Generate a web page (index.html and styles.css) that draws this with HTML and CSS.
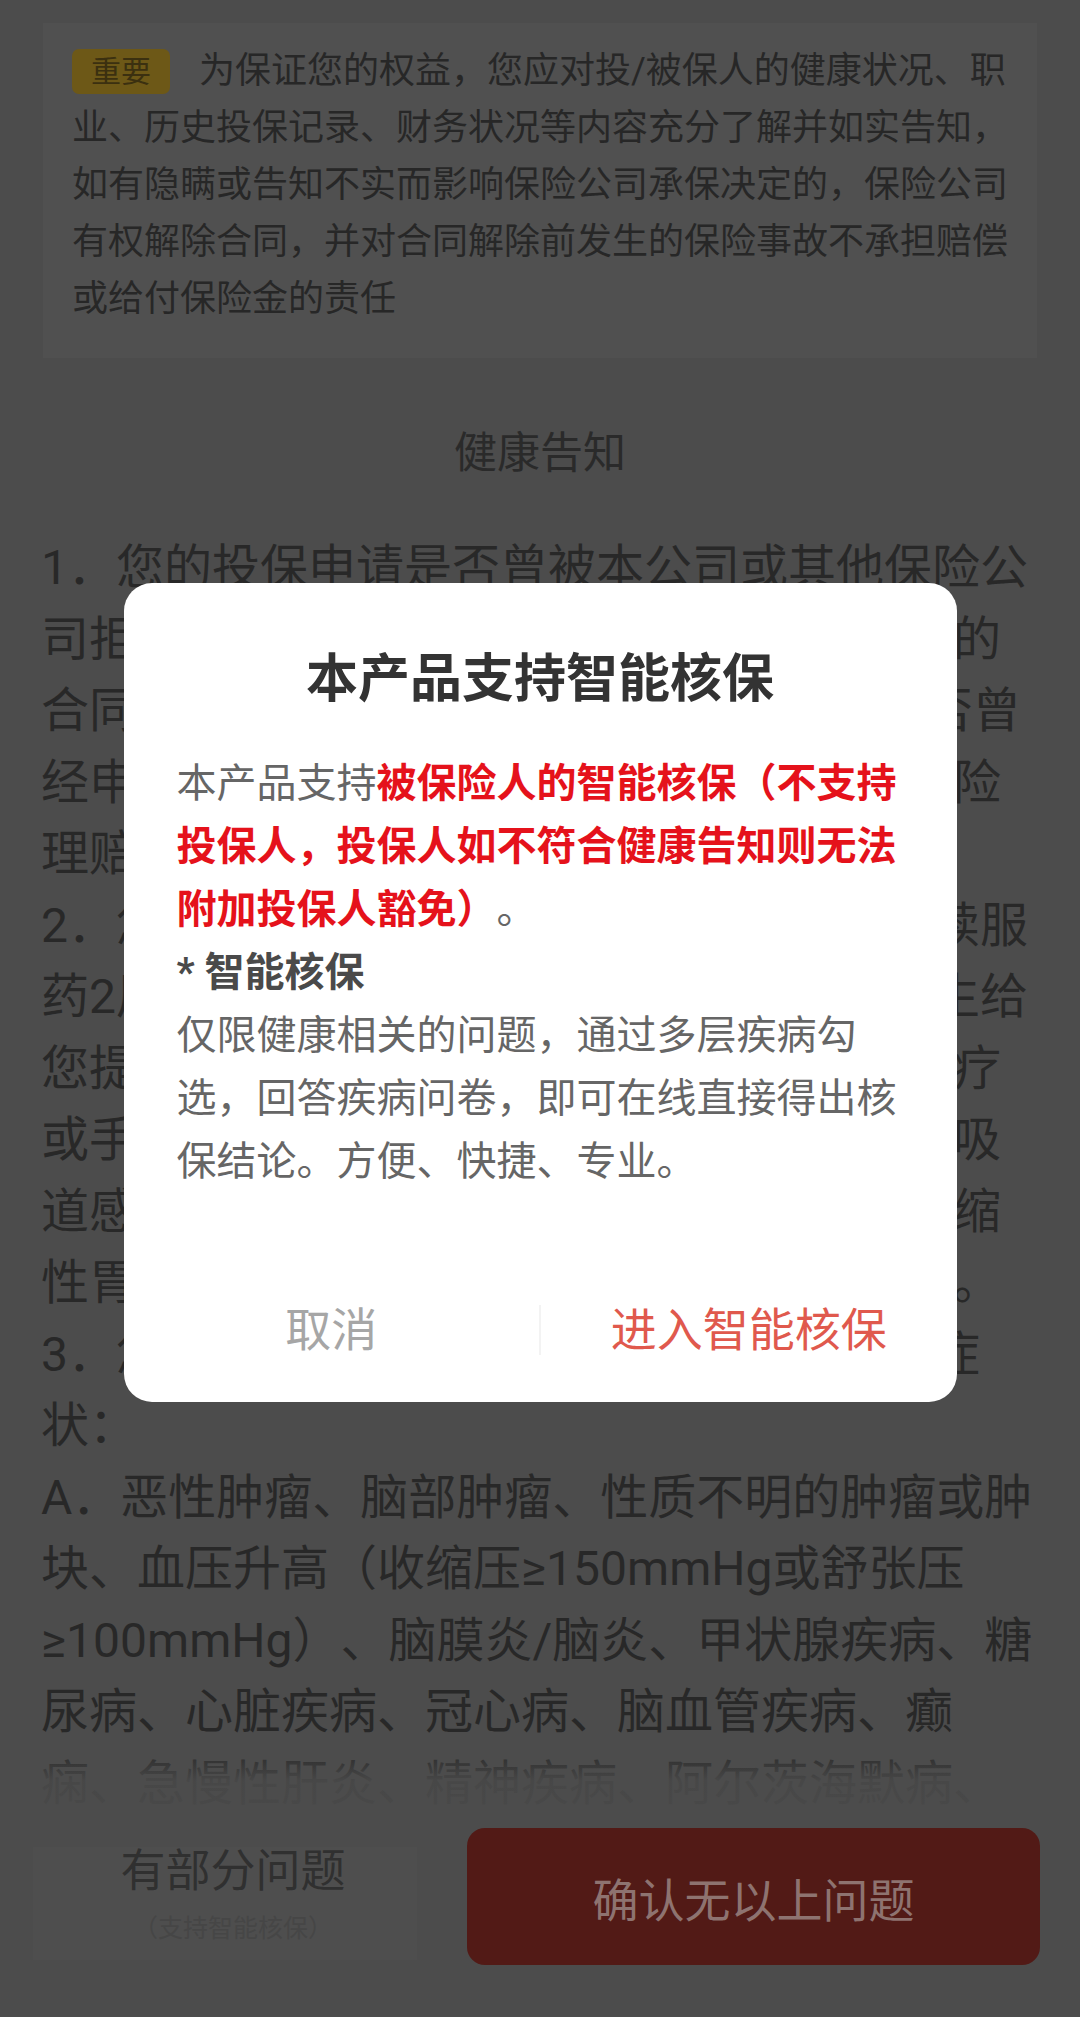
FILE: index.html
```html
<!DOCTYPE html>
<html lang="zh-CN">
<head>
<meta charset="utf-8">
<title>健康告知</title>
<link rel="stylesheet" href="styles.css">
</head>
<body>
<div class="page">
  <main class="content">
    <section class="notice-card">
      <span class="tag">重要</span>为保证您的权益，您应对投/被保人的健康状况、职业、历史投保记录、财务状况等内容充分了解并如实告知，如有隐瞒或告知不实而影响保险公司承保决定的，保险公司有权解除合同，并对合同解除前发生的保险事故不承担赔偿或给付保险金的责任
    </section>
    <h2 class="section-title">健康告知</h2>
    <div class="questions">
      <p>1．您的投保申请是否曾被本公司或其他保险公司拒保、延期、加费、附加条件承保或解除的合同？您是否曾申请过理赔/保全，或者是否曾经申请或正在申请本公司或其他保险公司保险理赔或豁免保费？</p>
      <p>2．您在过去两年内是否因疾病或受伤而连续服药2周以上，或在过去一年内是否曾经有医生给您提出过住院、进一步检查、随访、药物治疗或手术建议？（不包括普通感冒、急性上呼吸道感染、急性肠胃炎、阑尾炎、胆囊炎、萎缩性胃炎、浅表性胃炎、脂肪肝、胆结石等）。</p>
      <p>3．您是否曾经患有下列疾病或者出现下列症状：</p>
      <p>A．恶性肿瘤、脑部肿瘤、性质不明的肿瘤或肿块、血压升高（收缩压≥150mmHg或舒张压≥100mmHg）、脑膜炎/脑炎、甲状腺疾病、糖尿病、心脏疾病、冠心病、脑血管疾病、癫痫、急慢性肝炎、精神疾病、阿尔茨海默病、</p>
    </div>
  </main>
  <footer class="action-bar">
    <div class="btn-partial">
      <span class="btn-partial-label">有部分问题</span>
      <span class="btn-partial-hint">（支持智能核保）</span>
    </div>
    <div class="btn-confirm">确认无以上问题</div>
  </footer>
</div>

<div class="mask">
  <div class="dialog">
    <h1 class="dialog-title">本产品支持智能核保</h1>
    <div class="dialog-body">
      <p>本产品支持<span class="em-red">被保险人的智能核保（不支持投保人，投保人如不符合健康告知则无法附加投保人豁免）</span>。</p>
      <p class="dialog-sub">* 智能核保</p>
      <p>仅限健康相关的问题，通过多层疾病勾选，回答疾病问卷，即可在线直接得出核保结论。方便、快捷、专业。</p>
    </div>
    <div class="dialog-actions">
      <button class="dialog-btn dialog-btn-cancel" type="button">取消</button>
      <span class="dialog-divider"></span>
      <button class="dialog-btn dialog-btn-ok" type="button">进入智能核保</button>
    </div>
  </div>
</div>
</body>
</html>
```

FILE: styles.css
```css
html, body {
  margin: 0;
  padding: 0;
}

body {
  background: #4c4c4c;
  font-family: Roboto, "Noto Sans CJK SC", sans-serif;
  text-spacing-trim: space-all;
}

.page {
  height: 100vh;
  display: flex;
  flex-direction: column;
}

.content {
  flex: 1;
  min-height: 0;
  overflow: hidden;
  padding-top: 23px;
}

/* notice card */
.notice-card {
  margin: 0 43px;
  background: #505050;
  padding: 20px 15px 30px 29px;
  font-size: 36px;
  line-height: 57px;
  color: #272727;
}

.tag {
  display: inline-block;
  vertical-align: top;
  margin: 6px 29px 0 0;
  height: 45px;
  line-height: 45px;
  padding: 0 19px;
  border-radius: 7px;
  background: #6d5817;
  color: #3b3010;
  font-size: 30px;
}

.section-title {
  margin: 65px 0 0;
  text-align: center;
  font-size: 43px;
  line-height: 60px;
  font-weight: 400;
  color: #2a2a2a;
}

.questions {
  margin: 49px 0 0 41px;
  width: 1004px;
  font-size: 48px;
  line-height: 71.5px;
  color: #282828;
}

.questions p {
  margin: 0;
}

/* bottom action bar */
.action-bar {
  position: relative;
  flex: none;
  height: 197px;
  box-sizing: border-box;
  padding: 8px 40px 52px 33px;
  display: flex;
  align-items: flex-start;
  gap: 50px;
  background: #4c4c4c;
}

.action-bar::before {
  content: "";
  position: absolute;
  left: 0;
  right: 0;
  bottom: 100%;
  height: 72px;
  background: linear-gradient(rgba(76, 76, 76, 0), rgba(76, 76, 76, 0.86) 45%, rgba(76, 76, 76, 0.92));
}

.btn-partial {
  width: 384px;
  height: 113px;
  margin-top: 19px;
  box-sizing: border-box;
  padding-left: 16px;
  background: #4e4e4e;
  display: flex;
  flex-direction: column;
  align-items: center;
}

.btn-partial-label {
  font-size: 45px;
  line-height: 50px;
  color: #303030;
}

.btn-partial-hint {
  margin-top: 15px;
  font-size: 25px;
  line-height: 34px;
  color: #464646;
}

.btn-confirm {
  flex: 1;
  height: 137px;
  border-radius: 18px;
  background: #521a16;
  color: #8e7370;
  font-size: 46px;
  display: flex;
  align-items: center;
  justify-content: center;
}

/* modal */
.mask {
  position: fixed;
  inset: 0;
  box-sizing: border-box;
  padding-bottom: 32px;
  display: flex;
  align-items: center;
  justify-content: center;
}

.dialog {
  width: 833px;
  box-sizing: border-box;
  background: #ffffff;
  border-radius: 28px;
  padding: 65px 53px 17px;
}

.dialog-title {
  margin: 0;
  text-align: center;
  font-size: 52px;
  line-height: 64px;
  font-weight: 700;
  color: #333333;
}

.dialog-body {
  margin-top: 40px;
  font-size: 40px;
  line-height: 63px;
  color: #666666;
}

.dialog-body p {
  margin: 0;
}

.em-red {
  color: #e5121b;
  font-weight: 700;
}

.dialog-sub {
  font-weight: 700;
  color: #4a4a4a;
}

.dialog-actions {
  margin: 82px -53px 0;
  height: 110px;
  display: grid;
  grid-template-columns: 1fr 2px 1fr;
  align-items: center;
}

.dialog-divider {
  height: 50px;
  background: #f3f3f3;
}

.dialog-btn {
  font-family: inherit;
  font-size: 46px;
  line-height: 110px;
  padding: 0;
  border: 0;
  background: none;
  text-align: center;
}

.dialog-btn-cancel {
  color: #a6a6a6;
}

.dialog-btn-ok {
  color: #e0594d;
}
```
